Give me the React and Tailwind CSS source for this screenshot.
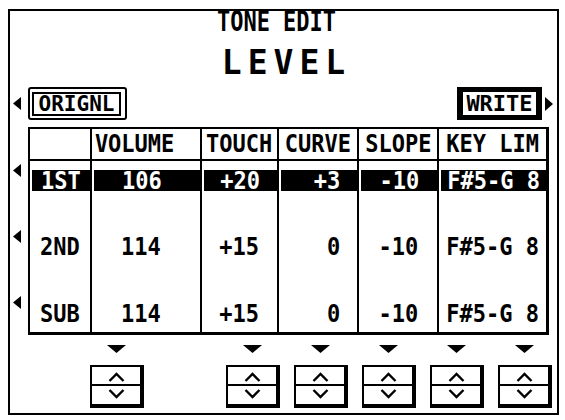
import React from 'react';

const lcd = "font-['DejaVu_Sans_Mono','Liberation_Mono',monospace] font-bold";
const txt = 'text-[22px] leading-none inline-block scale-y-[1.12]';

const columns = [
  { key: 'name', label: '', width: 'w-[60px]', head: 'justify-center', cell: 'justify-center' },
  { key: 'volume', label: 'VOLUME', width: 'w-[110px]', head: 'justify-start pl-[3px]', cell: 'justify-center pr-[10px]' },
  { key: 'touch', label: 'TOUCH', width: 'w-[77px]', head: 'justify-center', cell: 'justify-center' },
  { key: 'curve', label: 'CURVE', width: 'w-[81px]', head: 'justify-center', cell: 'justify-end pr-[17px]' },
  { key: 'slope', label: 'SLOPE', width: 'w-[80px]', head: 'justify-center', cell: 'justify-center' },
  { key: 'keyLim', label: 'KEY LIM', width: 'w-[109px]', head: 'justify-center', cell: 'justify-center' },
];

const rows = [
  { name: '1ST', volume: '106', touch: '+20', curve: '+3', slope: '-10', keyLim: 'F#5-G 8', active: true },
  { name: '2ND', volume: '114', touch: '+15', curve: '0', slope: '-10', keyLim: 'F#5-G 8' },
  { name: 'SUB', volume: '114', touch: '+15', curve: '0', slope: '-10', keyLim: 'F#5-G 8' },
];

// row heights / vertical placement per row
const rowStyles = [
  'h-[53px] items-start',
  'h-[66px] items-center',
  'h-[52px] items-end pb-[7px]',
];

const spinners = ['ml-[80px]', 'ml-[82px]', 'ml-[14px]', 'ml-[14px]', 'ml-[14px]', 'ml-[14px]'];

const TriLeft = () => (
  <svg width="8" height="13" viewBox="0 0 8 13" className="block">
    <polygon points="8,0 8,13 0,6.5" fill="#000" />
  </svg>
);

const TriRight = () => (
  <svg width="8" height="14" viewBox="0 0 8 14" className="block">
    <polygon points="0,0 0,14 8,7" fill="#000" />
  </svg>
);

const TriDown = () => (
  <svg width="19" height="8" viewBox="0 0 19 8" className="block">
    <polygon points="0,0 19,0 9.5,8" fill="#000" />
  </svg>
);

const Spinner = () => (
  <div className="w-[54px] h-[43px] border-2 border-r-[4px] border-b-[4px] border-black flex flex-col bg-white">
    <div className="h-[17px] flex items-end justify-center pb-[2px]">
      <svg width="17" height="10" viewBox="0 0 17 10">
        <polyline points="1.5,9 8.5,2 15.5,9" fill="none" stroke="#000" strokeWidth="2.4" />
      </svg>
    </div>
    <div className="h-[2px] bg-black -mx-[2px]" />
    <div className="flex-1 flex items-start justify-center pt-[3px]">
      <svg width="17" height="10" viewBox="0 0 17 10">
        <polyline points="1.5,1 8.5,8 15.5,1" fill="none" stroke="#000" strokeWidth="2.4" />
      </svg>
    </div>
  </div>
);

const Cell = ({ col, index, children, className }) => (
  <div className={`${col.width} flex ${index > 0 ? 'border-l-2 border-black' : ''} ${className}`}>
    {children}
  </div>
);

export default function App() {
  return (
    <div className={`w-[565px] h-[420px] bg-white text-black overflow-hidden ${lcd}`}>
      <div className="ml-[8px] mt-[9px] w-[551px] h-[406px] border-2 border-black flex flex-col">
        {/* Title */}
        <div className="h-[22px] flex justify-center pr-[14px]">
          <span className="text-[22px] leading-none inline-block scale-y-125">TONE EDIT</span>
        </div>
        <div className="mt-[13px] h-[33px] flex justify-center pl-[6px]">
          <span className="text-[33px] leading-none tracking-[6px]">LEVEL</span>
        </div>

        {/* ORIGNL / WRITE */}
        <div className="mt-[8px] h-[33px] flex items-center">
          <div className="ml-[3px]">
            <TriLeft />
          </div>
          <div className="ml-[7px] w-[99px] h-[33px] border-2 border-black rounded-[3px] pl-[2px] pr-[4px] pt-[3px] pb-[2px]">
            <div className="h-full border-2 border-black flex items-center justify-center">
              <span className="text-[21px] leading-none">ORIGNL</span>
            </div>
          </div>
          <div className="ml-auto w-[85px] h-[33px] bg-black px-[6px] py-[5px]">
            <div className="h-full bg-white flex items-center justify-center">
              <span className="text-[22px] leading-none">WRITE</span>
            </div>
          </div>
          <div className="ml-[3px] mr-[4px]">
            <TriRight />
          </div>
        </div>

        {/* Table with row markers */}
        <div className="mt-[7px] flex">
          <div className="w-[18px] flex flex-col pl-[3px] pt-[37px] gap-[53px]">
            {rows.map((r) => (
              <TriLeft key={r.name} />
            ))}
          </div>
          <div className="w-[521px] border-2 border-r-[3px] border-b-[3px] border-black">
            <div className="flex h-[32px] border-b-2 border-black">
              {columns.map((col, i) => (
                <Cell key={col.key} col={col} index={i} className={`items-center ${col.head}`}>
                  <span className={txt}>{col.label}</span>
                </Cell>
              ))}
            </div>
            {rows.map((row, r) => (
              <div key={row.name} className="flex">
                {columns.map((col, i) => (
                  <Cell key={col.key} col={col} index={i} className={rowStyles[r]}>
                    {row.active ? (
                      <div className={`mt-[9px] ml-[2px] h-[21px] flex-1 bg-black text-white flex items-center ${col.cell}`}>
                        <span className={txt}>{row[col.key]}</span>
                      </div>
                    ) : (
                      <div className={`flex-1 flex ${col.cell}`}>
                        <span className={txt}>{row[col.key]}</span>
                      </div>
                    )}
                  </Cell>
                ))}
              </div>
            ))}
          </div>
        </div>

        {/* Value spinners */}
        <div className="mt-[10px] flex">
          {spinners.map((m, i) => (
            <div key={i} className={`${m} w-[54px] flex flex-col items-center`}>
              <div className="pr-[2px]">
                <TriDown />
              </div>
              <div className="mt-[12px]">
                <Spinner />
              </div>
            </div>
          ))}
        </div>
      </div>
    </div>
  );
}
